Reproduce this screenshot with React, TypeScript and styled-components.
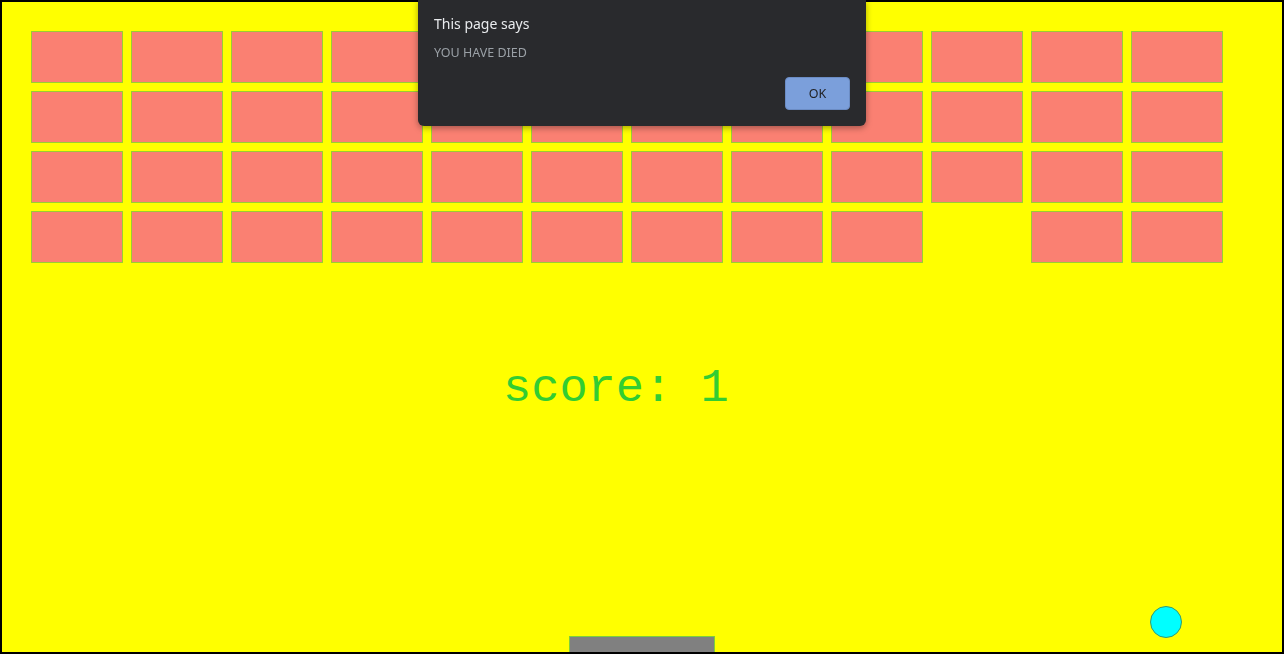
import React from "react";
import styled, { createGlobalStyle } from "styled-components";

const Global = createGlobalStyle`
  html, body { margin: 0; padding: 0; background: #ffff00; }
  body { width: 1284px; height: 654px; overflow: hidden; }
`;

const Board = styled.div`
  position: relative;
  box-sizing: border-box;
  width: 1284px;
  height: 654px;
  border: 2px solid #000;
  background: #ffff00;
  overflow: hidden;
`;

const BrickGrid = styled.div`
  display: grid;
  grid-template-columns: repeat(12, 92px);
  grid-auto-rows: 52px;
  gap: 8px;
  padding: 29px 0 0 29px;
`;

const Brick = styled.div<{ $broken?: boolean }>`
  box-sizing: border-box;
  background: #fa8072;
  border: 1px solid #9acd32;
  visibility: ${(p) => (p.$broken ? "hidden" : "visible")};
`;

const Score = styled.div`
  position: absolute;
  left: 501px;
  top: 363px;
  font-family: "Liberation Mono", "Courier New", monospace;
  font-size: 47px;
  line-height: 48px;
  color: #32cd32;
  white-space: pre;
`;

const Paddle = styled.div`
  position: absolute;
  left: 567px;
  top: 634px;
  width: 146px;
  height: 20px;
  box-sizing: border-box;
  background: #808080;
  border: 1px solid #7ccd3c;
`;

const Ball = styled.div`
  position: absolute;
  left: 1148px;
  top: 604px;
  width: 32px;
  height: 32px;
  box-sizing: border-box;
  border-radius: 50%;
  background: #00ffff;
  border: 1px solid #3a9a6a;
`;

const Dialog = styled.div`
  position: fixed;
  left: 418px;
  top: 0;
  width: 448px;
  height: 126px;
  box-sizing: border-box;
  background: #292a2d;
  border-radius: 0 0 6px 6px;
  box-shadow: 0 2px 6px rgba(0, 0, 0, 0.35);
  padding: 14px 16px 16px 16px;
  display: flex;
  flex-direction: column;
  font-family: "Noto Sans", "Open Sans", sans-serif;
`;

const Title = styled.div`
  color: #e8eaed;
  font-size: 14px;
  line-height: 20px;
`;

const Message = styled.div`
  color: #9aa0a6;
  font-size: 12.5px;
  line-height: 16px;
  margin-top: 11px;
`;

const Actions = styled.div`
  display: flex;
  justify-content: flex-end;
  margin-top: auto;
`;

const OkButton = styled.button`
  width: 65px;
  height: 33px;
  box-sizing: border-box;
  border: 1px solid #6b8cc4;
  border-radius: 4px;
  background: #7b9fdb;
  color: #202124;
  font-family: "Noto Sans", "Open Sans", sans-serif;
  font-size: 12.5px;
  padding: 0;
`;

const broken = new Set(["3-9"]);

export default function App() {
  const rows = [0, 1, 2, 3];
  const cols = Array.from({ length: 12 }, (_, i) => i);
  return (
    <>
      <Global />
      <Board>
        <BrickGrid>
          {rows.map((r) =>
            cols.map((c) => (
              <Brick key={`${r}-${c}`} $broken={broken.has(`${r}-${c}`)} />
            ))
          )}
        </BrickGrid>
        <Score>score: 1</Score>
        <Paddle />
        <Ball />
      </Board>
      <Dialog>
        <Title>This page says</Title>
        <Message>YOU HAVE DIED</Message>
        <Actions>
          <OkButton>OK</OkButton>
        </Actions>
      </Dialog>
    </>
  );
}
